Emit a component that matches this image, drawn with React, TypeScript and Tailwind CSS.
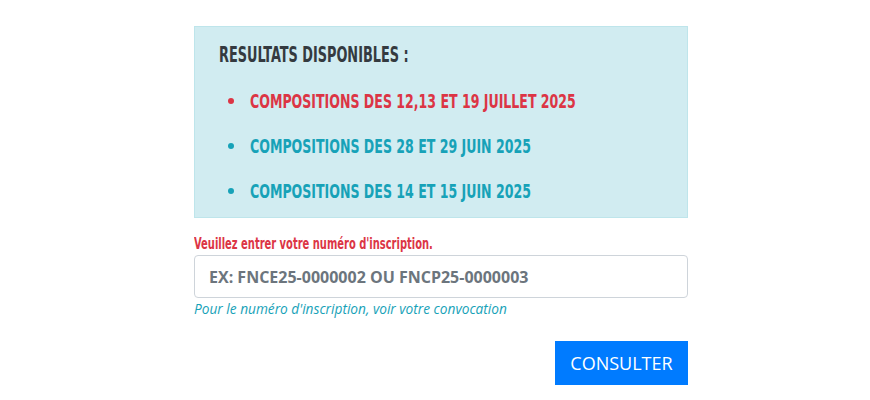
const cond = "font-['DejaVu_Sans_Condensed','DejaVu_Sans',sans-serif]";

const items = [
  { text: "COMPOSITIONS DES 12,13 ET 19 JUILLET 2025", color: "text-[#dc3545]", dot: "bg-[#dc3545]" },
  { text: "COMPOSITIONS DES 28 ET 29 JUIN 2025", color: "text-[#17a2b8]", dot: "bg-[#17a2b8]" },
  { text: "COMPOSITIONS DES 14 ET 15 JUIN 2025", color: "text-[#17a2b8]", dot: "bg-[#17a2b8]" },
];

export default function App() {
  return (
    <div className="min-h-[400px] w-full bg-white pt-[26px]">
      <div className="ml-[194px] w-[494px]">
        <div className="border border-[#bee5eb] bg-[#d1ecf1] pl-[24px] pt-[14px] pb-[12px]">
          <h2
            className={`${cond} inline-block origin-left scale-x-[0.65] whitespace-nowrap text-[22px] font-bold leading-[28px] text-[#343a40]`}
          >
            RESULTATS DISPONIBLES :
          </h2>
          <ul className="mt-[18px] flex flex-col gap-[17px] pl-[9px]">
            {items.map((it) => (
              <li key={it.text} className="flex items-center gap-[16px]">
                <span className={`h-[6px] w-[6px] shrink-0 rounded-full ${it.dot}`} />
                <span
                  className={`${cond} inline-block origin-left scale-x-[0.735] whitespace-nowrap text-[19px] font-bold leading-[28px] ${it.color}`}
                >
                  {it.text}
                </span>
              </li>
            ))}
          </ul>
        </div>

        <label
          className={`${cond} mt-[16px] block origin-left scale-x-[0.69] whitespace-nowrap text-[16px] font-bold leading-[20px] text-[#dc3545]`}
        >
          Veuillez entrer votre numéro d'inscription.
        </label>
        <input
          type="text"
          placeholder="EX: FNCE25-0000002 OU FNCP25-0000003"
          className="mt-[1px] block h-[43px] w-full rounded-[4px] border border-[#ced4da] bg-white px-[14px] font-['Open_Sans',sans-serif] text-[16px] font-bold text-[#495057] placeholder:text-[#6c757d] outline-none"
        />
        <p className="mt-[1px] font-['Open_Sans',sans-serif] text-[13.7px] italic leading-[20px] text-[#17a2b8]">
          Pour le numéro d'inscription, voir votre convocation
        </p>
        <div className="mt-[22px] flex justify-end">
          <button className="h-[44px] w-[133px] bg-[#007bff] font-['Open_Sans',sans-serif] text-[18px] leading-[24px] text-white">
            CONSULTER
          </button>
        </div>
      </div>
    </div>
  );
}
